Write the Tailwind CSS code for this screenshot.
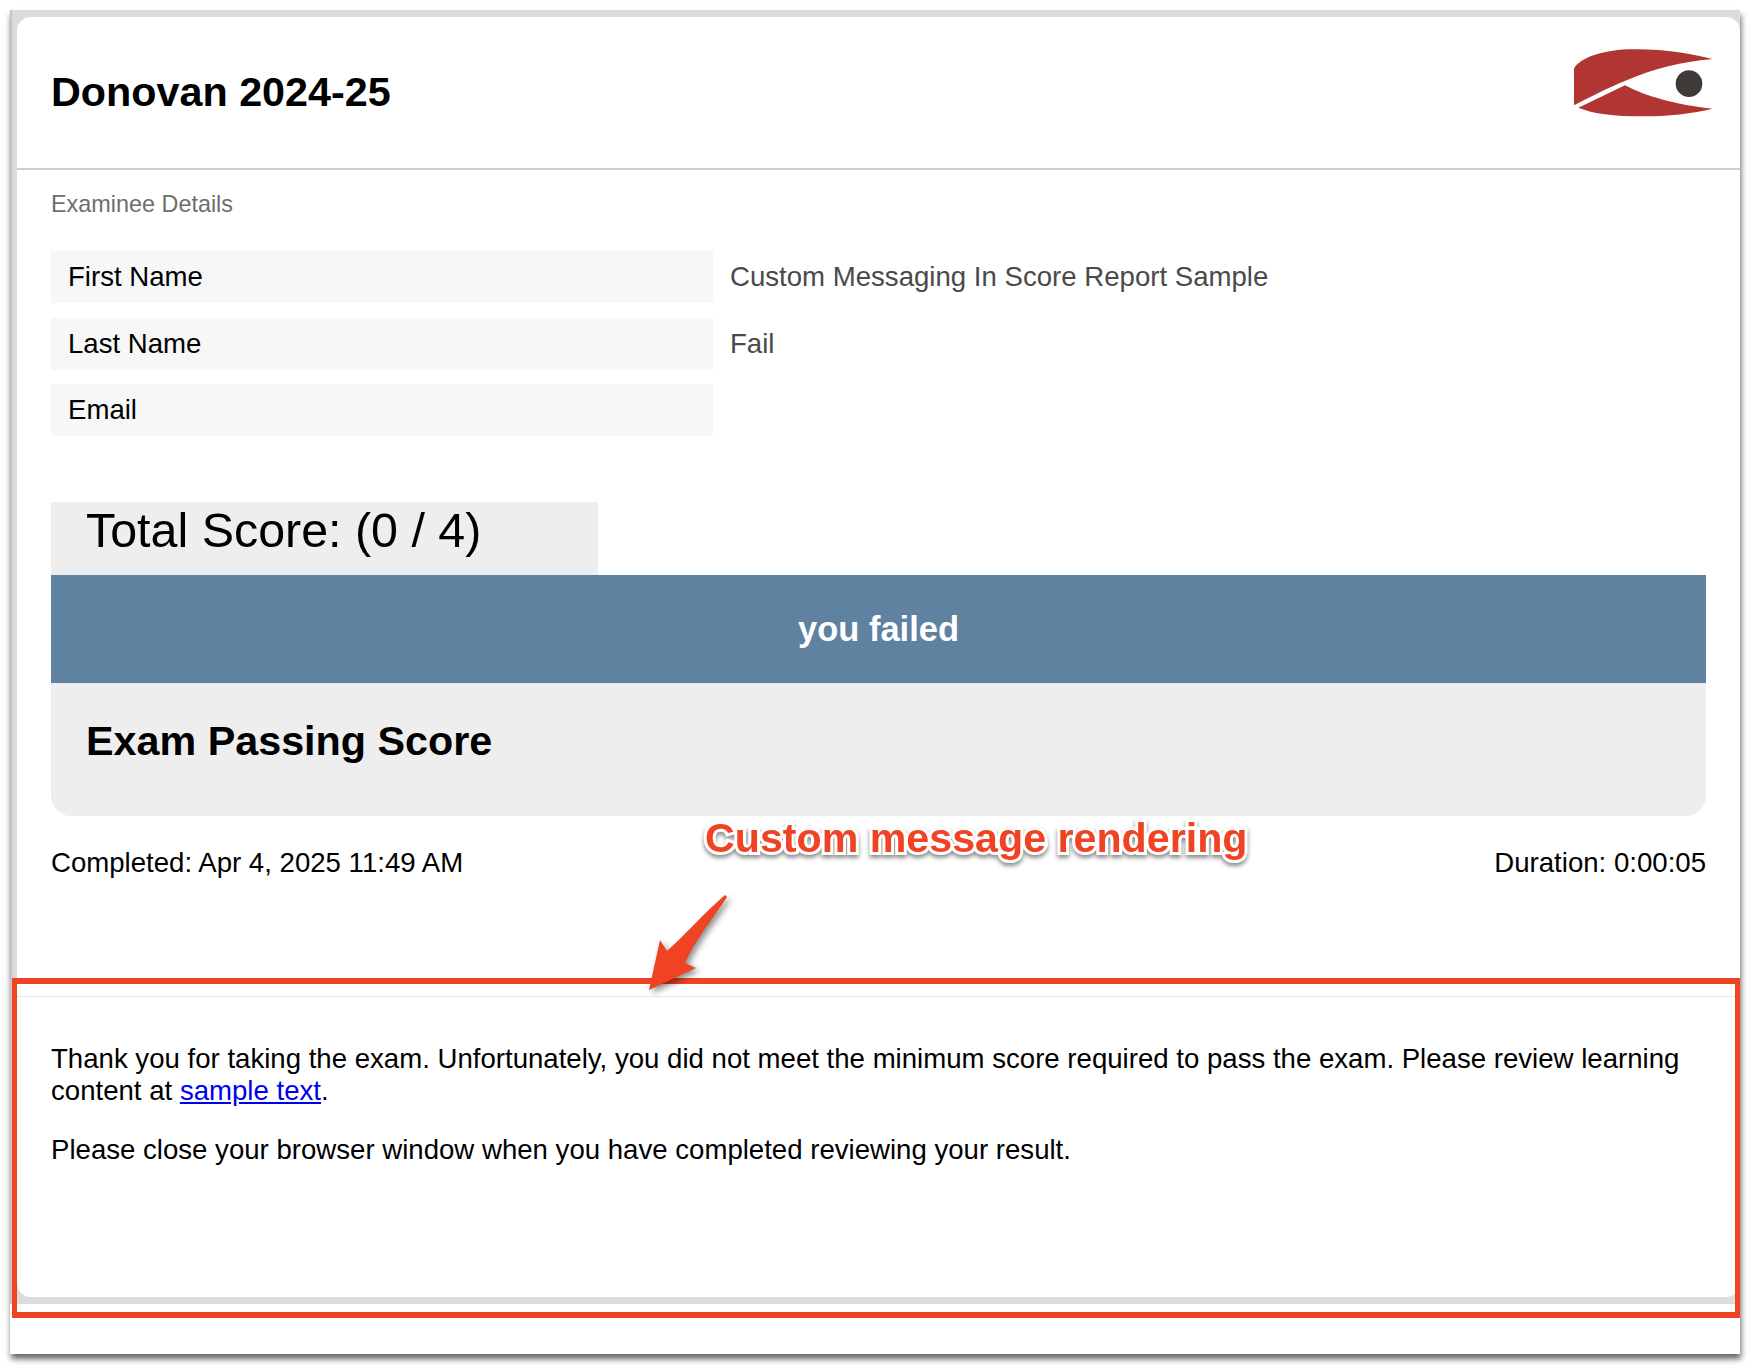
<!DOCTYPE html>
<html>
<head>
<meta charset="utf-8">
<script src="https://cdn.jsdelivr.net/npm/@tailwindcss/browser@4"></script>
</head>
<body class="bg-white font-['Liberation_Sans',Arial,sans-serif]">
<div class="relative w-[1754px] h-[1372px] overflow-hidden bg-white">
  <!-- screenshot window -->
  <div class="ml-[10px] mt-[10px] w-[1730px] h-[1344px] bg-white shadow-[1px_5px_6px_rgba(0,0,0,0.6)]">
    <div class="h-[1294px] bg-[#dcdcdc] pl-[7px] pt-[7px] pb-[7px] shadow-[inset_3px_0_3px_-2px_rgba(0,0,0,0.2)]">
      <div class="h-[1280px] bg-white rounded-[14px] flex flex-col">
        <header class="h-[153px] shrink-0 border-b-2 border-[#cfcfcf] flex items-center justify-between pl-[34px] pr-[23px]">
          <h1 class="text-[41.3px] leading-[48px] font-bold text-black -mt-[2px]">Donovan 2024-25</h1>
          <svg class="w-[146px] h-[76px] -mt-[15px]" viewBox="213 140 438 228" aria-hidden="true">
            <path fill="#b13533" d="M222 315 L222 205 C240 170 320 145 410 147 C500 147 580 162 638 176 C540 185 460 205 380 240 C320 265 270 290 222 315 Z"/>
            <path fill="#b13533" d="M235 322 L375 255 C430 285 530 315 638 325 C580 340 500 348 430 348 C340 348 280 340 235 322 Z"/>
            <circle cx="567" cy="250" r="40" fill="#3f3a37"/>
          </svg>
        </header>
        <section class="px-[34px] pt-[20px]">
          <h2 class="text-[23.4px] leading-[28px] text-[#6e6e6e]">Examinee Details</h2>
          <dl class="mt-[33px] flex flex-col gap-[14.5px] text-[27.6px] leading-[52px]">
            <div class="flex">
              <dt class="w-[662px] h-[52px] bg-[#f7f7f7] pl-[17px] text-black">First Name</dt>
              <dd class="pl-[17px] text-[#4a4a4a]">Custom Messaging In Score Report Sample</dd>
            </div>
            <div class="flex">
              <dt class="w-[662px] h-[52px] bg-[#f7f7f7] pl-[17px] text-black">Last Name</dt>
              <dd class="pl-[17px] text-[#4a4a4a]">Fail</dd>
            </div>
            <div class="flex">
              <dt class="w-[662px] h-[52px] bg-[#f7f7f7] pl-[17px] text-black">Email</dt>
              <dd class="pl-[17px] text-[#4a4a4a]"></dd>
            </div>
          </dl>
          <div class="mt-[66px] w-[547px] h-[73px] bg-[#eeeeee] pl-[35px] text-[48.4px] leading-[56px] text-black">Total Score: (0 / 4)</div>
          <div class="h-[108px] bg-[#5f82a0] flex items-center justify-center pt-[2px] text-[34.5px] font-bold text-white">you failed</div>
          <div class="h-[133px] bg-[#eeeeee] rounded-b-[20px] pl-[35px] pt-[34px] text-[41.3px] leading-[48px] font-bold text-black">Exam Passing Score</div>
          <div class="mt-[31px] flex justify-between text-[27.6px] leading-[32px] text-black">
            <span>Completed: Apr 4, 2025 11:49 AM</span>
            <span>Duration: 0:00:05</span>
          </div>
        </section>
        <section class="mt-[117px] border-t border-[#e8e8e8] px-[34px] pt-[46px] text-[27.6px] leading-[32px] text-black">
          <p>Thank you for taking the exam. Unfortunately, you did not meet the minimum score required to pass the exam. Please review learning content at <a href="#" class="text-[#0000ee] underline">sample text</a>.</p>
          <p class="mt-[27px]">Please close your browser window when you have completed reviewing your result.</p>
        </section>
      </div>
    </div>
  </div>

  <!-- annotations laid over the screenshot -->
  <div class="absolute left-[12px] top-[978px] w-[1728px] h-[340px] border-x-[5px] border-y-[6px] border-[#f04323]"></div>
  <span class="absolute left-[705px] top-[814px] text-[41.2px] leading-[48px] font-bold whitespace-nowrap text-[#f04323] [-webkit-text-stroke:6px_white] [paint-order:stroke_fill] [filter:drop-shadow(0_3px_2px_rgba(0,0,0,0.45))]">Custom message rendering</span>
  <svg class="absolute left-[640px] top-[885px] w-[100px] h-[115px] [filter:drop-shadow(3px_3px_3px_rgba(0,0,0,0.45))]" viewBox="640 885 100 115" aria-hidden="true">
    <path fill="#f04323" d="M649 990 L660 940 L667 951 C685 935 705 912 725 895 L727 897 C712 920 695 940 685 963 L696 968 Z"/>
  </svg>
</div>
</body>
</html>
